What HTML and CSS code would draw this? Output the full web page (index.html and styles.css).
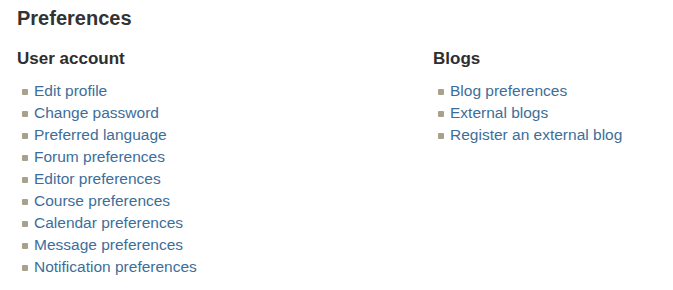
FILE: index.html
```html
<!DOCTYPE html>
<html>
<head>
<meta charset="utf-8">
<link rel="stylesheet" href="styles.css">
</head>
<body>
<div class="page">
  <h1 class="title">Preferences</h1>
  <div class="columns">
    <section class="group">
      <h2 class="group-title">User account</h2>
      <ul class="links">
        <li><a href="#">Edit profile</a></li>
        <li><a href="#">Change password</a></li>
        <li><a href="#">Preferred language</a></li>
        <li><a href="#">Forum preferences</a></li>
        <li><a href="#">Editor preferences</a></li>
        <li><a href="#">Course preferences</a></li>
        <li><a href="#">Calendar preferences</a></li>
        <li><a href="#">Message preferences</a></li>
        <li><a href="#">Notification preferences</a></li>
      </ul>
    </section>
    <section class="group">
      <h2 class="group-title">Blogs</h2>
      <ul class="links">
        <li><a href="#">Blog preferences</a></li>
        <li><a href="#">External blogs</a></li>
        <li><a href="#">Register an external blog</a></li>
      </ul>
    </section>
  </div>
</div>
</body>
</html>
```
FILE: styles.css
```css
html, body {
  margin: 0;
  padding: 0;
  background: #fff;
}
body {
  font-family: "Liberation Sans", Arial, sans-serif;
  color: #333;
}
.page {
  padding: 6px 17px 0 17px;
}
.title {
  margin: 0;
  font-size: 20px;
  line-height: 24px;
  font-weight: bold;
  color: #333;
}
.columns {
  display: grid;
  grid-template-columns: 416px 1fr;
  margin-top: 19px;
}
.group-title {
  margin: 0 0 11px 0;
  font-size: 17px;
  line-height: 20px;
  font-weight: bold;
  color: #2e2e2e;
}
.links {
  list-style: none;
  margin: 0;
  padding: 0 0 0 5px;
}
.links li {
  display: flex;
  align-items: center;
  gap: 6px;
  font-size: 15.5px;
  line-height: 22px;
}
.links li::before {
  content: "";
  width: 6px;
  height: 6px;
  border-radius: 1px;
  background: #a8a18c;
  flex: none;
  margin-top: 1px;
}
.links a {
  color: #3d6e99;
  text-decoration: none;
}
```
